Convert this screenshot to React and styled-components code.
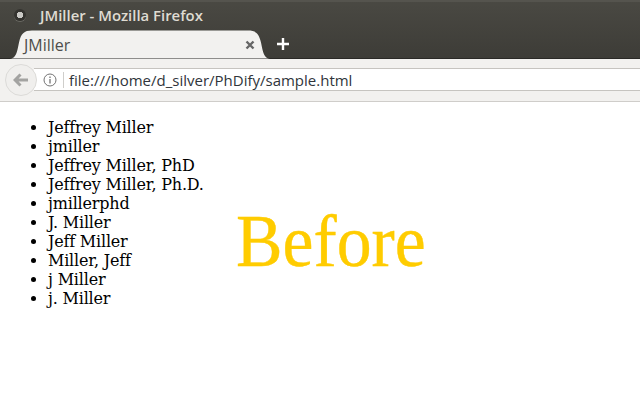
import React from 'react'
import styled, { createGlobalStyle } from 'styled-components'

const GlobalStyle = createGlobalStyle`
  html, body {
    margin: 0;
    padding: 0;
    background: #fff;
  }
  #root {
    width: 640px;
    height: 400px;
    overflow: hidden;
  }
`

const Page = styled.div`
  position: relative;
  width: 640px;
  height: 400px;
  background: #fff;
  font-family: "Open Sans", "Noto Sans", sans-serif;
`

const Chrome = styled.header`
  background: linear-gradient(#4a4943, #3d3c37);
`

const TitleBar = styled.div`
  display: flex;
  align-items: center;
  height: 30px;
  padding: 0 0 2px 14px;
  box-sizing: border-box;
  border-top: 2px solid #55544e;
  color: #dfdbd2;
  font-size: 14.900px;
  font-weight: 600;
`

const WindowDot = styled.span`
  width: 12px;
  height: 12px;
  margin-right: 14px;
  border-radius: 50%;
  background: radial-gradient(circle, #c9c8c4 0 3px, #34332f 3.500px);
  box-shadow: 0 1px 0 #6a6963;
`

const TabStrip = styled.div`
  display: flex;
  align-items: center;
  height: 29px;
  border-bottom: 1px solid #2a2926;
  box-sizing: border-box;
`

const TabShape = styled.div`
  display: flex;
  align-items: center;
  justify-content: space-between;
  width: 260px;
  height: 29px;
  margin-left: 10px;
  padding: 2px 15px 0 14px;
  box-sizing: border-box;
  background: #f2f1ef;
  color: #4d4d4b;
  font-size: 16px;
  clip-path: path("M0 29C6 29 7 23 9 13C11 4 14 1 22 1H238C246 1 249 4 251 13C253 23 254 29 260 29Z");
`

const NewTab = styled.svg`
  margin-left: 6px;
  display: block;
`

const NavBar = styled.nav`
  display: flex;
  align-items: center;
  height: 43px;
  padding: 0 0 1px 5px;
  box-sizing: border-box;
  background: #f2f1ef;
  border-bottom: 1px solid #cfcdca;
`

const BackButton = styled.div`
  display: flex;
  align-items: center;
  justify-content: center;
  position: relative;
  z-index: 1;
  width: 30px;
  height: 30px;
  border-radius: 50%;
  border: 1px solid #dcdbd8;
  background: #f0efed;
  flex: none;
`

const UrlBar = styled.div`
  display: flex;
  align-items: center;
  flex: 1;
  height: 21px;
  margin-left: -3px;
  padding-left: 9px;
  background: #fff;
  border-top: 1px solid #c6c4c0;
  border-bottom: 1px solid #c6c4c0;
`

const Divider = styled.span`
  width: 1px;
  height: 16px;
  margin: 0 5px 0 6px;
  background: #cfcecb;
`

const Url = styled.span`
  color: #30353b;
  font-size: 15px;
`

const NameList = styled.ul`
  margin: 16px 0 0 10px;
  padding: 0 0 0 38px;
  color: #000;
  font-family: "DejaVu Serif", serif;
  font-size: 16px;
  letter-spacing: -0.190px;
  line-height: 19px;
`

const Stamp = styled.div`
  position: absolute;
  left: 236px;
  top: 198px;
  color: #fc0;
  font-family: "Liberation Serif", serif;
  font-size: 75px;
  line-height: 86px;
  -webkit-text-stroke: 0.400px #fc0;
  transform: scaleX(0.93);
  transform-origin: left center;
`

const names = [
  'Jeffrey Miller',
  'jmiller',
  'Jeffrey Miller, PhD',
  'Jeffrey Miller, Ph.D.',
  'jmillerphd',
  'J. Miller',
  'Jeff Miller',
  'Miller, Jeff',
  'j Miller',
  'j. Miller',
]

const App = () => (
  <Page>
    <GlobalStyle />
    <Chrome>
      <TitleBar>
        <WindowDot />
        JMiller - Mozilla Firefox
      </TitleBar>
      <TabStrip>
        <TabShape>
          JMiller
          <svg width="10" height="10" viewBox="0 0 10 10">
            <path d="M1.500 1.500l7 7M8.500 1.500l-7 7" stroke="#666" strokeWidth="2.400" />
          </svg>
        </TabShape>
        <NewTab width="14" height="14" viewBox="0 0 14 14">
          <path d="M7 1v12M1 7h12" stroke="#fff" strokeWidth="2.400" />
        </NewTab>
      </TabStrip>
    </Chrome>
    <NavBar>
      <BackButton>
        <svg width="16" height="14" viewBox="0 0 16 14">
          <path d="M7.500 1.500L2 7l5.500 5.500M2.500 7H15" fill="none" stroke="#a3a3a1" strokeWidth="3" />
        </svg>
      </BackButton>
      <UrlBar>
        <svg width="14" height="14" viewBox="0 0 14 14">
          <circle cx="7" cy="7" r="6" fill="none" stroke="#737373" />
          <path d="M7 6v4.500M7 3.500v1.500" stroke="#737373" strokeWidth="1.300" />
        </svg>
        <Divider />
        <Url>file:///home/d_silver/PhDify/sample.html</Url>
      </UrlBar>
    </NavBar>
    <NameList>
      {names.map((name) => (
        <li key={name}>{name}</li>
      ))}
    </NameList>
    <Stamp>Before</Stamp>
  </Page>
)

export default App
